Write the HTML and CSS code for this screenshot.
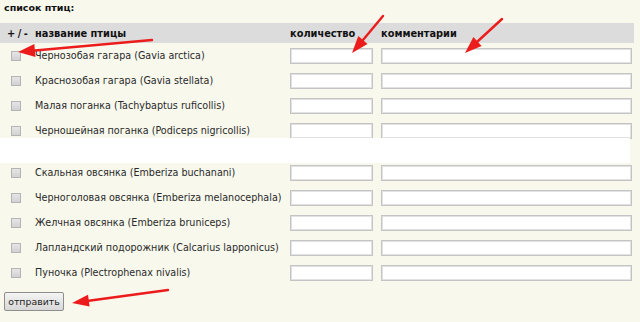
FILE: index.html
```html
<!DOCTYPE html>
<html lang="ru">
<head>
<meta charset="utf-8">
<title>список птиц</title>
<link rel="stylesheet" href="styles.css">
</head>
<body>
<div class="page">
  <div class="title">список птиц:</div>
  <form class="birds">
    <div class="row head">
      <span class="c-check pm">+/-</span>
      <span class="c-name">название птицы</span>
      <span class="c-qty">количество</span>
      <span class="c-com">комментарии</span>
    </div>
    <div class="row"><span class="c-check"><input type="checkbox" class="cb"></span><span class="c-name">Чернозобая гагара (Gavia arctica)</span><span class="c-qty"><input type="text" class="qty"></span><span class="c-com"><input type="text" class="com"></span></div>
    <div class="row"><span class="c-check"><input type="checkbox" class="cb"></span><span class="c-name">Краснозобая гагара (Gavia stellata)</span><span class="c-qty"><input type="text" class="qty"></span><span class="c-com"><input type="text" class="com"></span></div>
    <div class="row"><span class="c-check"><input type="checkbox" class="cb"></span><span class="c-name">Малая поганка (Tachybaptus ruficollis)</span><span class="c-qty"><input type="text" class="qty"></span><span class="c-com"><input type="text" class="com"></span></div>
    <div class="row"><span class="c-check"><input type="checkbox" class="cb"></span><span class="c-name">Черношейная поганка (Podiceps nigricollis)</span><span class="c-qty"><input type="text" class="qty"></span><span class="c-com"><input type="text" class="com"></span></div>
    <div class="cut"></div>
    <div class="row"><span class="c-check"><input type="checkbox" class="cb"></span><span class="c-name">Скальная овсянка (Emberiza buchanani)</span><span class="c-qty"><input type="text" class="qty"></span><span class="c-com"><input type="text" class="com"></span></div>
    <div class="row"><span class="c-check"><input type="checkbox" class="cb"></span><span class="c-name">Черноголовая овсянка (Emberiza melanocephala)</span><span class="c-qty"><input type="text" class="qty"></span><span class="c-com"><input type="text" class="com"></span></div>
    <div class="row"><span class="c-check"><input type="checkbox" class="cb"></span><span class="c-name">Желчная овсянка (Emberiza bruniceps)</span><span class="c-qty"><input type="text" class="qty"></span><span class="c-com"><input type="text" class="com"></span></div>
    <div class="row"><span class="c-check"><input type="checkbox" class="cb"></span><span class="c-name">Лапландский подорожник (Calcarius lapponicus)</span><span class="c-qty"><input type="text" class="qty"></span><span class="c-com"><input type="text" class="com"></span></div>
    <div class="row"><span class="c-check"><input type="checkbox" class="cb"></span><span class="c-name">Пуночка (Plectrophenax nivalis)</span><span class="c-qty"><input type="text" class="qty"></span><span class="c-com"><input type="text" class="com"></span></div>
    <div class="actions"><button type="button" class="send">отправить</button></div>
  </form>
  <svg class="arrows" width="640" height="322" viewBox="0 0 640 322" aria-hidden="true">
    <g stroke="#ec1c1c" stroke-width="2.4" stroke-linecap="round" fill="none">
      <line x1="152" y1="40" x2="35" y2="50.5"/>
      <line x1="383" y1="16" x2="363" y2="40"/>
      <line x1="502" y1="19" x2="477.5" y2="41.5"/>
      <line x1="168" y1="290" x2="88.8" y2="300.7"/>
    </g>
    <g fill="#ec1c1c">
      <polygon points="18,52 34.3,44 35.5,57"/>
      <polygon points="352,53 358.3,36.1 367.5,43.9"/>
      <polygon points="465,53 473.4,37.1 481.6,45.9"/>
      <polygon points="72,303 88,294.8 89.6,306.6"/>
    </g>
  </svg>
</div>
</body>
</html>
```

FILE: styles.css
```css
html, body {
  margin: 0;
  padding: 0;
  background: #f8f8ed;
}
.page {
  position: relative;
  width: 640px;
  height: 322px;
  overflow: hidden;
  font-family: "DejaVu Sans", Verdana, sans-serif;
  font-size: 9.6px;
  color: #2a2a2a;
}
.title {
  height: 23px;
  padding-left: 4px;
  font-weight: bold;
  font-size: 9.5px;
  line-height: 16px;
  color: #111;
}
.birds {
  margin: 0;
  width: 634px;
}
.row {
  display: grid;
  grid-template-columns: 35px 255px 91px 253px;
  align-items: center;
  height: 25px;
}
.row.head {
  height: 20px;
  background: #dcdcdc;
  font-weight: bold;
  font-size: 9.8px;
  color: #111;
}
.head .pm {
  padding-left: 7px;
  letter-spacing: 2.5px;
}
.c-check {
  display: flex;
  align-items: center;
  padding-left: 11px;
}
.c-qty, .c-com {
  display: flex;
}
.cb {
  appearance: none;
  -webkit-appearance: none;
  margin: 0;
  width: 10px;
  height: 10px;
  border: 1px solid #b4b4b4;
  background: linear-gradient(#e6e6e6, #d2d2d2);
  box-sizing: border-box;
}
.qty, .com {
  margin: 0;
  padding: 0;
  height: 16px;
  box-sizing: border-box;
  border: 1px solid #c4c4c4;
  box-shadow: inset 0 0 0 1px #e2e2e2;
  background: #fff;
}
.qty {
  width: 83px;
}
.com {
  width: 251px;
}
.cut {
  position: relative;
  height: 17px;
}
.cut::before {
  content: "";
  position: absolute;
  left: 0;
  width: 630px;
  top: -5px;
  bottom: -3px;
  background: #fff;
}
.actions {
  padding: 7px 0 0 4px;
}
.send {
  margin: 0;
  width: 60px;
  height: 19px;
  padding: 0;
  font-family: "DejaVu Sans", Verdana, sans-serif;
  font-size: 9.4px;
  color: #222;
  border: 1px solid #8e8e8e;
  border-radius: 2px;
  background: linear-gradient(#f4f4f4, #d8d8d8);
}
.arrows {
  position: absolute;
  left: 0;
  top: 0;
  pointer-events: none;
}
```
